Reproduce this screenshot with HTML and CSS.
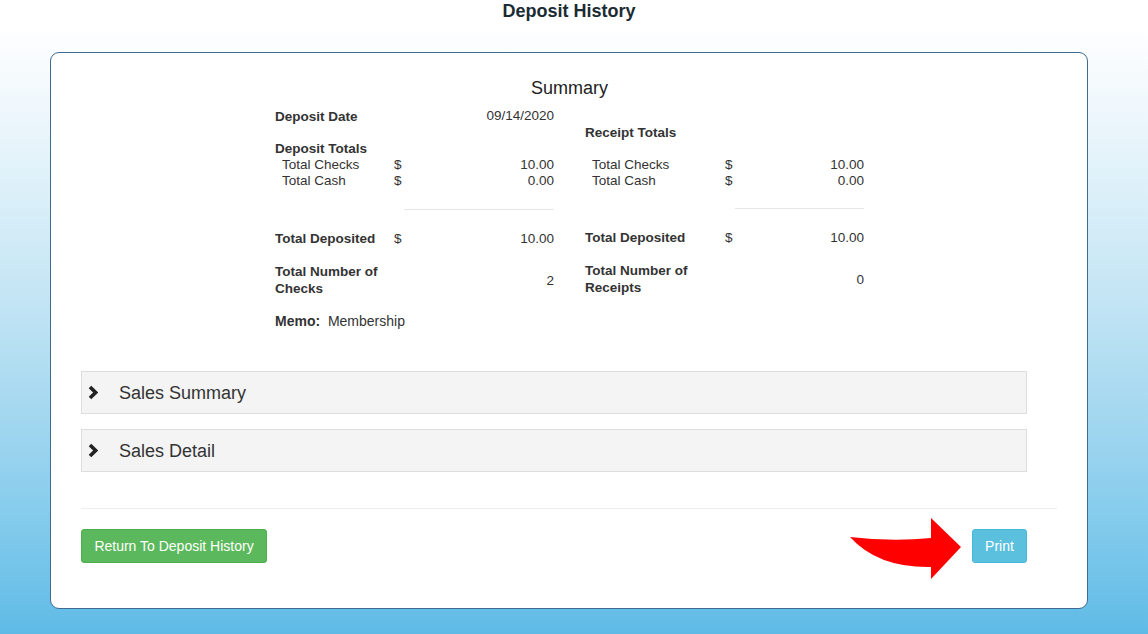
FILE: index.html
```html
<!DOCTYPE html>
<html>
<head>
<meta charset="utf-8">
<title>Deposit History</title>
<link rel="stylesheet" href="styles.css">
</head>
<body>
<h1 class="page-title">Deposit History</h1>
<div class="card">
  <h2 class="summary-title">Summary</h2>
  <div class="summary-cols">
    <div class="col col-left">
      <div class="row"><span class="lbl b">Deposit Date</span><span></span><span class="val up">09/14/2020</span></div>
      <div class="row gap17"><span class="lbl b">Deposit Totals</span></div>
      <div class="row"><span class="lbl ind">Total Checks</span><span>$</span><span class="val">10.00</span></div>
      <div class="row"><span class="lbl ind">Total Cash</span><span>$</span><span class="val">0.00</span></div>
      <div class="row div-row"><span></span><span></span><span class="rule"></span></div>
      <div class="row gap21"><span class="lbl b">Total Deposited</span><span>$</span><span class="val">10.00</span></div>
      <div class="row two gap16"><span class="lbl b">Total Number of Checks</span><span></span><span class="val mid">2</span></div>
      <div class="row memo"><span class="b">Memo:</span>&nbsp; Membership</div>
    </div>
    <div class="col col-right">
      <div class="row gap16"><span class="lbl b">Receipt Totals</span></div>
      <div class="row gap16"><span class="lbl ind">Total Checks</span><span>$</span><span class="val">10.00</span></div>
      <div class="row"><span class="lbl ind">Total Cash</span><span>$</span><span class="val">0.00</span></div>
      <div class="row div-row r"><span></span><span></span><span class="rule"></span></div>
      <div class="row gap21"><span class="lbl b">Total Deposited</span><span>$</span><span class="val">10.00</span></div>
      <div class="row two gap16"><span class="lbl b">Total Number of Receipts</span><span></span><span class="val mid">0</span></div>
    </div>
  </div>

  <div class="panels">
    <div class="panel">
      <svg class="chev" width="10" height="15" viewBox="0 0 10 15"><polyline points="2,2 7.6,7.5 2,13" fill="none" stroke="#222" stroke-width="3.6" stroke-linejoin="miter"/></svg>
      <span class="panel-title">Sales Summary</span>
    </div>
    <div class="panel">
      <svg class="chev" width="10" height="15" viewBox="0 0 10 15"><polyline points="2,2 7.6,7.5 2,13" fill="none" stroke="#222" stroke-width="3.6" stroke-linejoin="miter"/></svg>
      <span class="panel-title">Sales Detail</span>
    </div>
  </div>

  <hr class="sep">

  <div class="actions">
    <button class="btn btn-green">Return To Deposit History</button>
    <div class="print-wrap">
      <svg class="arrow" width="112" height="62" viewBox="850 518 112 62"><path d="M850,537 Q892,542 931,538 L931,518 L961,547 L931,579 L931,567 Q878,568 850,537 Z" fill="#ff0000"/></svg>
      <button class="btn btn-blue">Print</button>
    </div>
  </div>
</div>
</body>
</html>
```
FILE: styles.css
```css
html, body {
  margin: 0;
  padding: 0;
}
body {
  width: 1148px;
  height: 634px;
  overflow: hidden;
  font-family: "Liberation Sans", Arial, sans-serif;
  color: #333;
  background: linear-gradient(to bottom, #ffffff 0%, #ffffff 4%, #f3f9fd 14%, #dcf0f9 30%, #c2e4f4 48%, #a4d8f0 65%, #84cbec 82%, #5fbbe6 100%);
}
.page-title {
  margin: 0;
  padding-top: 1px;
  width: 1138px;
  height: 52px;
  box-sizing: border-box;
  text-align: center;
  font-size: 18px;
  line-height: 20px;
  font-weight: bold;
  color: #1b2b33;
}
.card {
  margin-left: 50px;
  width: 1038px;
  height: 557px;
  box-sizing: border-box;
  background: #fff;
  border: 1px solid #3f6b90;
  border-radius: 9px;
  padding: 25px 29px 0 30px;
}
.summary-title {
  margin: 0;
  text-align: center;
  font-size: 18px;
  line-height: 20px;
  font-weight: normal;
  color: #222;
}
.summary-cols {
  display: flex;
  justify-content: center;
  gap: 31px;
  margin-top: 11px;
  font-size: 13.5px;
  line-height: 16px;
}
.col {
  display: flex;
  flex-direction: column;
}
.col-left { width: 279px; }
.col-right { width: 279px; }
.col-left .row { display: grid; grid-template-columns: 119px 10px 150px; }
.col-right .row { display: grid; grid-template-columns: 140px 10px 129px; }
.b { font-weight: bold; }
.lbl { white-space: nowrap; }
.ind { padding-left: 7px; }
.val { text-align: right; }
.val.up { position: relative; top: -1px; }
.gap16 { margin-top: 16px; }
.gap17 { margin-top: 16px; }
.gap21 { margin-top: 21px; }
.div-row { margin-top: 20px; }
.div-row.r { margin-top: 19px; }
.rule {
  display: block;
  border-top: 1px solid #e6e6e6;
}
.row.two { line-height: 17px; }
.row.two .lbl { white-space: normal; width: 112px; }
.val.mid { align-self: center; }
.col-left .row.memo {
  display: block;
  margin-top: 16px;
  font-size: 14px;
}
.panels {
  margin-top: 42px;
  width: 946px;
  display: flex;
  flex-direction: column;
  gap: 15px;
}
.panel {
  height: 43px;
  box-sizing: border-box;
  background: #f4f4f4;
  border: 1px solid #dddddd;
  display: flex;
  align-items: center;
  padding-left: 6px;
}
.chev { flex: none; margin-top: 0; }
.panel-title {
  margin-left: 21px;
  font-size: 18px;
  color: #333;
  position: relative;
  top: 1px;
}
.sep {
  margin: 36px 0 0 0;
  border: 0;
  border-top: 1px solid #eeeeee;
  height: 0;
  width: 976px;
}
.actions {
  margin-top: 20px;
  width: 946px;
  display: flex;
  justify-content: space-between;
  align-items: flex-start;
}
.btn {
  font-family: "Liberation Sans", Arial, sans-serif;
  font-size: 14px;
  line-height: 20px;
  height: 34px;
  padding: 6px 12px;
  border-radius: 3px;
  color: #fff;
  cursor: pointer;
}
.btn-green {
  background: #5cb85c;
  border: 1px solid #4cae4c;
  width: 186px;
  padding: 6px 0;
}
.btn-blue {
  background: #5bc0de;
  border: 1px solid #46b8da;
  width: 55px;
  padding: 6px 0;
}
.print-wrap {
  position: relative;
}
.arrow {
  position: absolute;
  left: -122px;
  top: -11px;
}
```
